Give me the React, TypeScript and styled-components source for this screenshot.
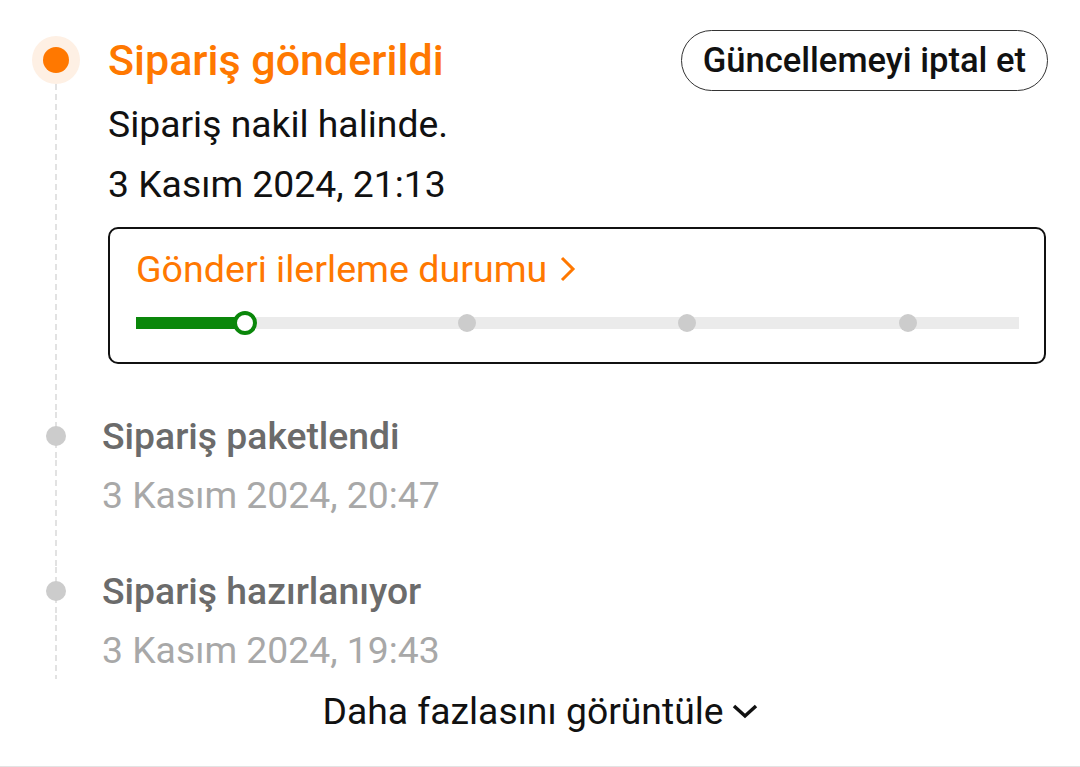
import React from "react";
import styled, { createGlobalStyle } from "styled-components";

const Global = createGlobalStyle`
  html, body { margin: 0; padding: 0; background: #fff; }
  body { font-family: Roboto, "Noto Sans", Arial, sans-serif; color: #111; -webkit-font-smoothing: antialiased; }
  * { box-sizing: border-box; }
`;

const Page = styled.div`
  width: 1080px;
  height: 767px;
  padding: 36px 33px 0 32px;
  display: flex;
  flex-direction: column;
  border-bottom: 1px solid #e3e3e3;
  overflow: hidden;
`;

const Timeline = styled.div`
  display: flex;
  flex-direction: column;
`;

const Item = styled.div`
  display: flex;
`;

const Rail = styled.div`
  width: 48px;
  flex: none;
  display: flex;
  flex-direction: column;
  align-items: center;
`;

const dash = `repeating-linear-gradient(to bottom, #e2e2e2 0 6px, transparent 6px 10px)`;

const DotSlot = styled.div<{ $line?: boolean }>`
  width: 48px;
  height: 48px;
  flex: none;
  display: flex;
  align-items: center;
  justify-content: center;
  background: ${(p) => (p.$line ? `${dash} center / 2px 100% no-repeat` : "none")};
`;

const Dash = styled.div`
  flex: 1;
  width: 2px;
  background: ${dash};
`;

const Halo = styled.div`
  width: 48px;
  height: 48px;
  border-radius: 50%;
  background: #fef0e4;
  display: flex;
  align-items: center;
  justify-content: center;
`;

const Dot = styled.div<{ $size: number; $color: string }>`
  width: ${(p) => p.$size}px;
  height: ${(p) => p.$size}px;
  border-radius: 50%;
  background: ${(p) => p.$color};
`;

const Content = styled.div<{ $active?: boolean; $last?: boolean }>`
  flex: 1;
  margin-left: ${(p) => (p.$active ? 28 : 22)}px;
  padding-bottom: ${(p) => (p.$last ? 5 : 48)}px;
  display: flex;
  flex-direction: column;
`;

const Header = styled.div`
  height: 48px;
  display: flex;
  align-items: center;
  justify-content: space-between;
`;

const Title = styled.div<{ $active?: boolean }>`
  font-size: ${(p) => (p.$active ? 43 : 37.3)}px;
  line-height: 48px;
  font-weight: 500;
  color: ${(p) => (p.$active ? "#ff7800" : "#6b6b6b")};
  white-space: nowrap;
`;

const CancelButton = styled.button`
  height: 61px;
  flex: none;
  padding: 0 21px;
  border: 1.5px solid #333;
  border-radius: 31px;
  background: #fff;
  font-family: inherit;
  font-size: 34.6px;
  font-weight: 500;
  color: #111;
  margin-right: -1px;
`;

const Line = styled.div`
  font-size: 37.3px;
  line-height: 60px;
  color: #111;
  white-space: nowrap;
`;

const DateLine = styled.div`
  font-size: 37.3px;
  line-height: 48px;
  margin-top: 11px;
  color: #a8a8a8;
  white-space: nowrap;
`;

const Details = styled.div`
  margin-top: 10px;
`;

const ProgressCard = styled.div`
  margin-top: 13px;
  height: 137px;
  border: 2px solid #111;
  border-radius: 10px;
  padding: 20px 25px 0 26px;
  display: flex;
  flex-direction: column;
  margin-right: 1px;
`;

const CardLink = styled.div`
  display: flex;
  align-items: center;
  gap: 13px;
  height: 40px;
  font-size: 37.6px;
  color: #ff7800;
  white-space: nowrap;
`;

const Track = styled.div`
  margin-top: 22px;
  height: 24px;
  position: relative;
  display: flex;
  align-items: center;
`;

const TrackBar = styled.div`
  flex: 1;
  height: 12px;
  background: #ebebeb;
  display: flex;
`;

const TrackFill = styled.div`
  height: 12px;
  background: #0a870a;
`;

const Marker = styled.div<{ $current?: boolean }>`
  position: absolute;
  top: 50%;
  transform: translate(-50%, -50%);
  border-radius: 50%;
  width: ${(p) => (p.$current ? 24 : 18)}px;
  height: ${(p) => (p.$current ? 24 : 18)}px;
  background: ${(p) => (p.$current ? "#fff" : "#cccccc")};
  border: ${(p) => (p.$current ? "4px solid #0a870a" : "none")};
`;

const More = styled.div`
  margin-top: 8px;
  height: 48px;
  display: flex;
  align-items: center;
  justify-content: center;
  gap: 8px;
  font-size: 37.3px;
  color: #111;
  margin-left: -32px;
  margin-right: -33px;
`;

const ChevronRight = () => (
  <svg width="16" height="26" viewBox="0 0 16 26" fill="none">
    <path d="M2 2 L13 13 L2 24" stroke="#ff7800" strokeWidth="3" strokeLinejoin="miter" />
  </svg>
);

const ChevronDown = () => (
  <svg width="26" height="16" viewBox="0 0 26 16" fill="none">
    <path d="M2 3 L13 13 L24 3" stroke="#111" strokeWidth="3.5" />
  </svg>
);

const steps = [
  { title: "Sipariş paketlendi", date: "3 Kasım 2024, 20:47" },
  { title: "Sipariş hazırlanıyor", date: "3 Kasım 2024, 19:43" },
];

export default function App() {
  const trackWidth = 884;
  const current = 109;
  const dots = [331, 552, 773];
  return (
    <>
      <Global />
      <Page>
        <Timeline>
          <Item>
            <Rail>
              <DotSlot>
                <Halo>
                  <Dot $size={26} $color="#ff7800" />
                </Halo>
              </DotSlot>
              <Dash />
            </Rail>
            <Content $active>
              <Header>
                <Title $active>Sipariş gönderildi</Title>
                <CancelButton>Güncellemeyi iptal et</CancelButton>
              </Header>
              <Details>
                <Line>Sipariş nakil halinde.</Line>
                <Line>3 Kasım 2024, 21:13</Line>
              </Details>
              <ProgressCard>
                <CardLink>
                  Gönderi ilerleme durumu
                  <ChevronRight />
                </CardLink>
                <Track>
                  <TrackBar>
                    <TrackFill style={{ width: `${(current / trackWidth) * 100}%` }} />
                  </TrackBar>
                  {dots.map((d) => (
                    <Marker key={d} style={{ left: `${(d / trackWidth) * 100}%` }} />
                  ))}
                  <Marker $current style={{ left: `${(current / trackWidth) * 100}%` }} />
                </Track>
              </ProgressCard>
            </Content>
          </Item>
          {steps.map((s, i) => (
            <Item key={s.title}>
              <Rail>
                <DotSlot $line>
                  <Dot $size={20} $color="#cccccc" />
                </DotSlot>
                <Dash />
              </Rail>
              <Content $last={i === steps.length - 1}>
                <Header>
                  <Title>{s.title}</Title>
                </Header>
                <DateLine>{s.date}</DateLine>
              </Content>
            </Item>
          ))}
        </Timeline>
        <More>
          Daha fazlasını görüntüle
          <ChevronDown />
        </More>
      </Page>
    </>
  );
}
